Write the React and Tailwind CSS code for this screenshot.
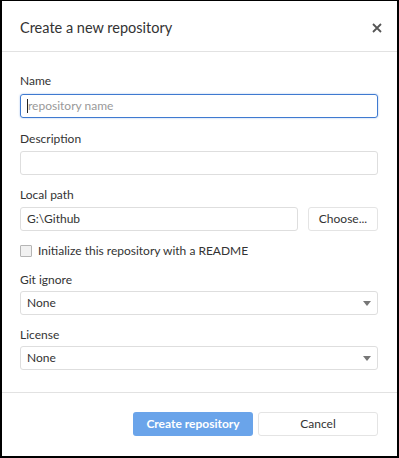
import React from "react";

const Label = ({ children }) => (
  <label className="block text-[12px] leading-4 text-[#333]">{children}</label>
);

const Select = ({ value }) => (
  <div className="mt-[3px] h-6 flex items-center justify-between border border-[#dedede] rounded-[3px] pl-[6px] pr-[6px] text-[12px] text-[#333]">
    <span>{value}</span>
    <svg width="8" height="5" viewBox="0 0 8 5">
      <path d="M0 0h8L4 5z" fill="#777" />
    </svg>
  </div>
);

const App = () => {
  return (
    <div
      className="w-[399px] h-[458px] bg-white border-t border-b-2 border-l-2 border-r-2 border-black flex flex-col"
      style={{ fontFamily: 'Lato, "Noto Sans", sans-serif' }}
    >
      <div className="h-[51px] shrink-0 flex items-center justify-between pl-[18px] pr-[15px] pt-[3px] border-b border-[#e2e2e2]">
        <h1 className="text-[14.5px] text-[#333]">Create a new repository</h1>
        <svg width="10" height="10" viewBox="0 0 10 10">
          <path d="M1 1l8 8M9 1l-8 8" stroke="#555" strokeWidth="1.8" />
        </svg>
      </div>

      <div className="flex-1 pl-[18px] pr-[19px] pt-[21px] flex flex-col">
        <Label>Name</Label>
        <div className="mt-[5px] h-6 flex items-center border border-[#3f7ad0] rounded-[3px] shadow-[0_0_2px_#9dbcea] pl-[6px] text-[12px]">
          <span className="w-px h-[14px] bg-[#222]" />
          <span className="text-[#999]">repository name</span>
        </div>

        <div className="mt-[13px]">
          <Label>Description</Label>
          <div className="mt-[4px] h-6 border border-[#dedede] rounded-[3px]" />
        </div>

        <div className="mt-[12px]">
          <Label>Local path</Label>
          <div className="mt-[4px] flex gap-[10px]">
            <div className="flex-1 h-6 flex items-center border border-[#dedede] rounded-[3px] pl-[6px] text-[12px] text-[#333]">
              G:\Github
            </div>
            <button className="w-[70px] h-6 border border-[#e4e4e4] rounded-[3px] text-[12px] text-[#333] bg-white">
              Choose...
            </button>
          </div>
        </div>

        <div className="mt-[12px] flex items-center gap-[6px] text-[12px] text-[#333] h-4">
          <span className="w-3 h-3 border border-[#b5b5b5] bg-[#f1f1f1] rounded-[1px]" />
          Initialize this repository with a README
        </div>

        <div className="mt-[13px]">
          <Label>Git ignore</Label>
          <Select value="None" />
        </div>

        <div className="mt-[12px]">
          <Label>License</Label>
          <Select value="None" />
        </div>
      </div>

      <div className="h-[64px] shrink-0 border-t border-[#e2e2e2] flex items-center justify-end gap-[5px] pr-[19px] pb-[2px]">
        <button className="w-[120px] h-6 rounded-[3px] bg-[#6aa4ea] text-white text-[12px] font-bold">
          Create repository
        </button>
        <button className="w-[120px] h-6 rounded-[3px] border border-[#e4e4e4] bg-white text-[12px] text-[#333]">
          Cancel
        </button>
      </div>
    </div>
  );
};

export default App;
